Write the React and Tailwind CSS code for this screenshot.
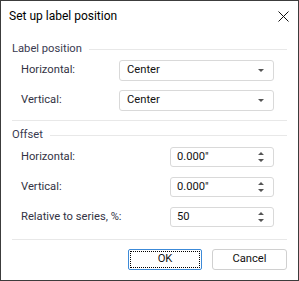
export default function App() {
  const font = "font-['Segoe_UI','Roboto',sans-serif]";
  const Combo = ({ value }) => (
    <div className="w-[155px] h-[21px] border border-[#d9d9d9] rounded-[3px] bg-white flex items-center justify-between pl-[7px] pr-[9px]">
      <span>{value}</span>
      <svg width="6" height="3" viewBox="0 0 6 3"><path d="M0 0H6L3 3Z" fill="#555" /></svg>
    </div>
  );
  const Spin = ({ value }) => (
    <div className="w-[104px] h-[20px] border border-[#d9d9d9] rounded-[3px] bg-white flex items-center justify-between pl-[6px] pr-[9px]">
      <span>{value}</span>
      <svg width="6" height="10" viewBox="0 0 6 10"><path d="M0 3H6L3 0Z M0 7H6L3 10Z" fill="#555" /></svg>
    </div>
  );
  const Header = ({ text }) => (
    <div className="h-[16px] flex items-center gap-[7px]">
      <span className="text-[#3a3a50]">{text}</span>
      <div className="flex-1 h-px bg-[#e8e8e8]" />
    </div>
  );
  const Row = ({ label, children, className = "" }) => (
    <div className={"flex items-center justify-between pl-[9px] pr-[13px] " + className}>
      <span className="text-[#333344]">{label}</span>
      {children}
    </div>
  );
  return (
    <div className={"w-[299px] h-[281px] border border-[#3c3c3c] bg-white flex flex-col text-[11.2px] text-[#111] " + font}>
      <div className="h-[30px] flex items-center justify-between pl-[8px] pr-[9px]">
        <span className="text-[12px] text-black">Set up label position</span>
        <svg width="11" height="11" viewBox="0 0 11 11"><path d="M0.5 0.5L10.5 10.5M10.5 0.5L0.5 10.5" stroke="#111" strokeWidth="1" /></svg>
      </div>
      <div className="flex flex-col px-[11px]">
        <div className="mt-[10px]"><Header text="Label position" /></div>
        <Row label="Horizontal:" className="mt-[3px]"><Combo value="Center" /></Row>
        <Row label="Vertical:" className="mt-[9px]"><Combo value="Center" /></Row>
        <div className="mt-[9px] h-px bg-[#e8e8e8]" />
        <div className="mt-[6px]"><Header text="Offset" /></div>
        <Row label="Horizontal:" className="mt-[4px]"><Spin value={'0.000"'} /></Row>
        <Row label="Vertical:" className="mt-[10px]"><Spin value={'0.000"'} /></Row>
        <Row label="Relative to series, %:" className="mt-[10px]"><Spin value="50" /></Row>
        <div className="mt-[12px] h-px bg-[#e8e8e8]" />
        <div className="mt-[9px] flex justify-end gap-[10px]">
          <div className="w-[74px] h-[21px] border border-[#3c8ad8] rounded-[2px] p-[1px]">
            <div className="w-full h-full border border-dotted border-black flex items-center justify-center">OK</div>
          </div>
          <div className="w-[75px] h-[21px] border border-[#d0d0d0] rounded-[3px] flex items-center justify-center">Cancel</div>
        </div>
      </div>
    </div>
  );
}
